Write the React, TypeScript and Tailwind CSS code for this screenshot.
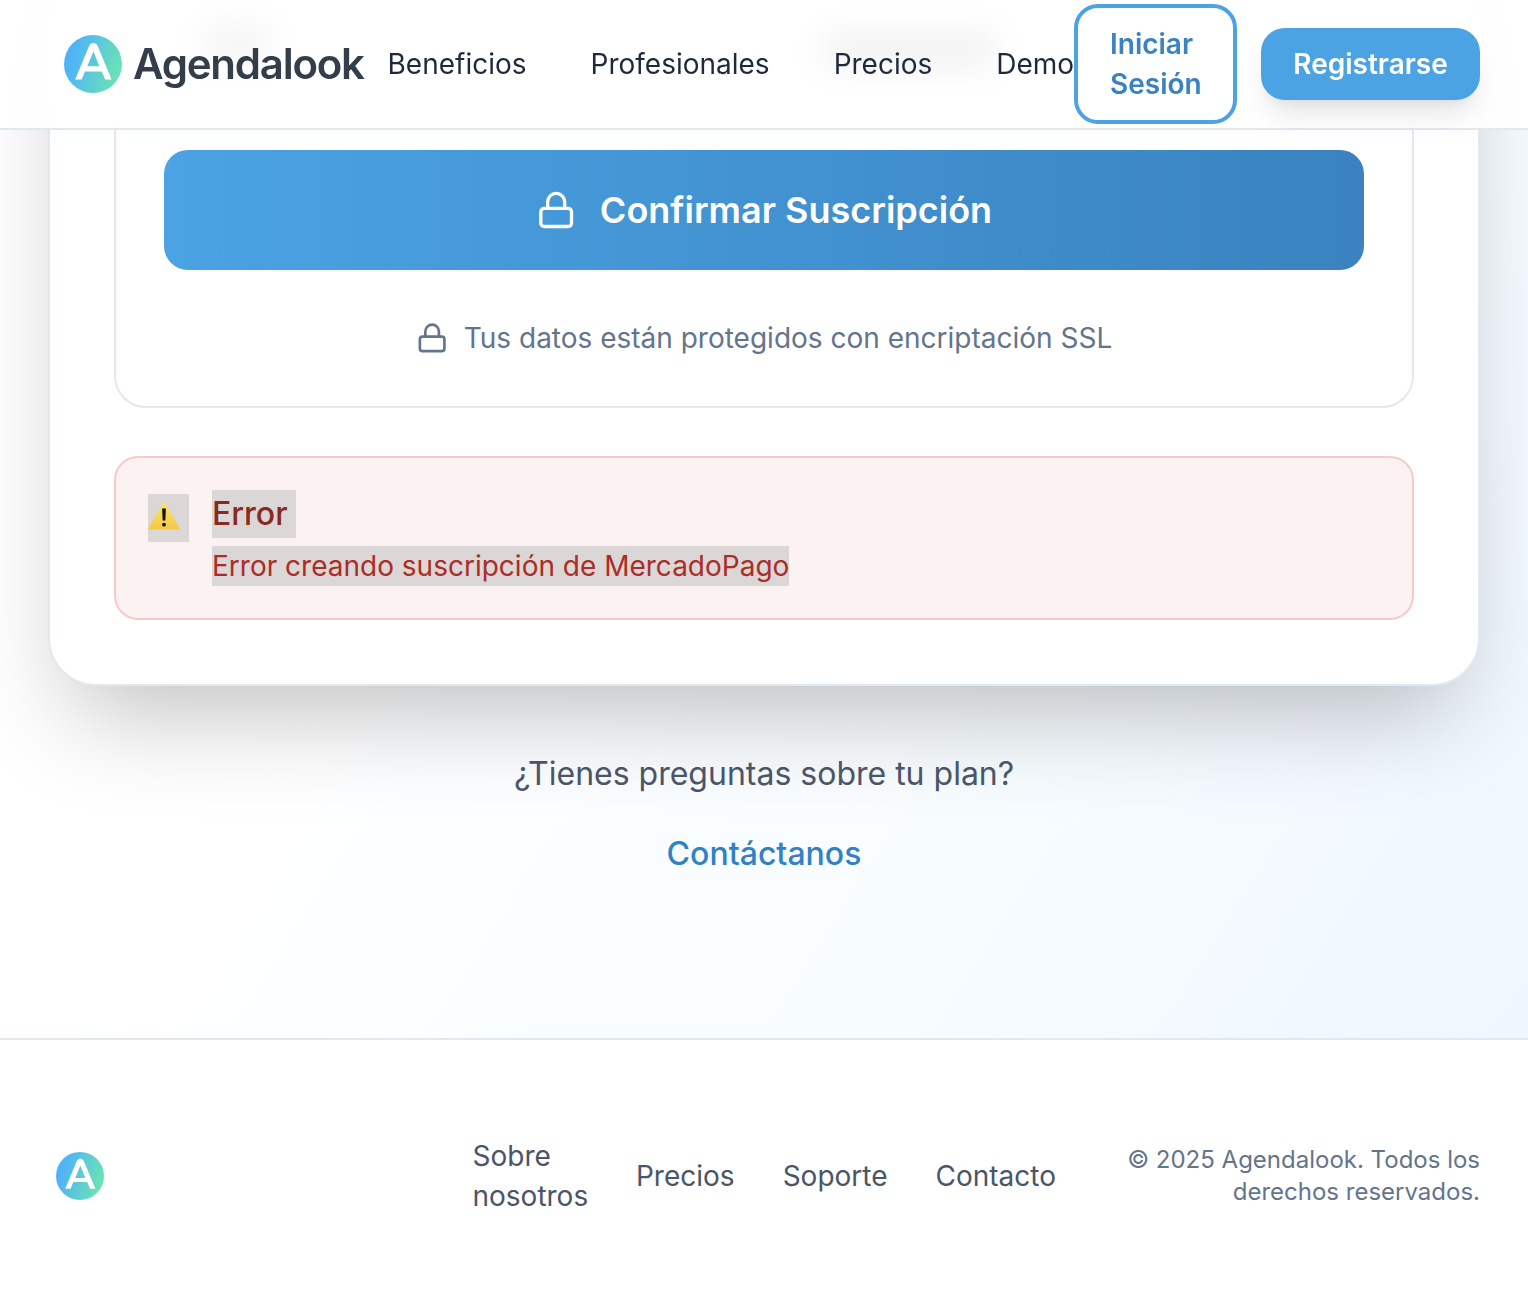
import React from "react";

function LogoMark({ id, className }: { id: string; className: string }) {
  return (
    <svg viewBox="0 0 58 58" className={className} aria-hidden="true">
      <defs>
        <linearGradient id={id} x1="0" y1="0.35" x2="1" y2="0.65">
          <stop offset="0.1" stopColor="#4fb2f9" />
          <stop offset="0.9" stopColor="#68e0b8" />
        </linearGradient>
      </defs>
      <circle cx="29" cy="29" r="29" fill={`url(#${id})`} />
      <path
        fillRule="evenodd"
        fill="#fff"
        d="M11.2 44.4 L24.9 11.4 Q26.4 8 29.4 8 Q32.4 8 33.9 11.4 L47.6 44.4 H41.2 L37.8 36.4 H21 L17.6 44.4 Z M23.3 31.3 H35.5 L29.4 16.6 Z"
      />
    </svg>
  );
}

function LockIcon({ className }: { className: string }) {
  return (
    <svg viewBox="0 0 24 24" fill="none" stroke="currentColor" strokeWidth="2" strokeLinejoin="round" className={className} aria-hidden="true">
      <rect x="2.9" y="11" width="18.4" height="10.9" rx="2" />
      <path d="M7 11V7.1a5.1 5.1 0 0110.2 0V11" />
    </svg>
  );
}

function Warning() {
  return (
    <svg viewBox="0 0 32 28" className="-mt-1 h-7 w-8" aria-hidden="true">
      <defs>
        <linearGradient id="warn" x1="0" y1="0" x2="0" y2="1">
          <stop offset="0" stopColor="#fbe36a" />
          <stop offset="1" stopColor="#f6c843" />
        </linearGradient>
      </defs>
      <path d="M14.9 0.9 Q16 -0.5 17.1 0.9 L31.6 26 Q32.2 27.5 30.5 27.6 H1.5 Q-0.2 27.5 0.4 26 Z" fill="url(#warn)" />
      <path d="M14.1 6.6 H17.9 L17.3 18.4 H14.7 Z" fill="#111" />
      <circle cx="16" cy="22.7" r="1.9" fill="#111" />
    </svg>
  );
}

const navLinks = ["Beneficios", "Profesionales", "Precios", "Demo"];

export default function App() {
  return (
    <div className="flex h-[1312px] w-[1528px] flex-col overflow-hidden bg-white font-['Inter',sans-serif] text-[28px] leading-10">
      <header className="relative z-10 flex h-[130px] shrink-0 items-center border-b-2 border-[#e2e8f0] bg-white/90 pr-12 pl-16 backdrop-blur-lg">
        <div className="absolute top-6 left-[200px] h-10 w-[74px] rounded-full bg-black/4 blur-lg" />
        <div className="absolute top-8 left-[820px] h-9 w-[180px] rounded-full bg-black/5 blur-lg" />
        <div className="relative flex w-[323.5px] shrink-0 items-center">
          <LogoMark id="mark-header" className="size-[58px]" />
          <span className="mb-px ml-[11px] text-[42px] font-semibold tracking-[-1.23px] text-[#343d4a]">Agendalook</span>
        </div>
        <nav className="relative flex w-[686.5px] shrink-0 gap-16 whitespace-nowrap text-[#1e293b]">
          {navLinks.map((l) => (
            <a key={l}>{l}</a>
          ))}
        </nav>
        <div className="relative flex flex-1 items-center justify-between font-semibold">
          <a className="w-[163px] rounded-3xl border-4 border-[#4ba3e3] bg-white px-8 py-4 text-[#3a82c0]">
            Iniciar Sesión
          </a>
          <a className="flex h-[72px] w-[219px] items-center justify-center rounded-3xl bg-[#4ba3e3] text-white shadow-[0_20px_30px_-6px_rgba(0,0,0,0.1),0_8px_12px_-4px_rgba(0,0,0,0.05)]">
            Registrarse
          </a>
        </div>
      </header>

      <main className="h-[908px] shrink-0 bg-linear-[122deg] from-white from-30% via-[#f7fcff] via-68% to-[#eff6ff] px-12">
        <div className="-mt-[230px] flex h-[786px] flex-col justify-end rounded-[48px] border-2 border-[#e2e8f0] bg-white px-16 pb-16 shadow-[0_50px_100px_-24px_rgba(0,0,0,0.25)]">
          <section className="rounded-[32px] border-2 border-[#e5e7eb] px-12 pt-[132px] pb-12">
            <button className="flex h-[120px] w-full items-center justify-center rounded-3xl bg-linear-to-r from-[#4ba3e3] to-[#3a82c0] text-[36px] font-semibold text-white">
              <LockIcon className="mr-6 size-10" />
              Confirmar Suscripción
            </button>
            <p className="mt-12 flex items-center justify-center text-[#64748b]">
              <LockIcon className="mr-4 size-8" />
              Tus datos están protegidos con encriptación SSL
            </p>
          </section>
          <section className="mt-12 flex h-[164px] shrink-0 items-start rounded-3xl border-2 border-[#f6caca] bg-[#fcf2f1] p-8">
            <div className="mt-1 flex h-12 w-[41px] items-center bg-[#dbd7d6]">
              <Warning />
            </div>
            <div className="ml-[23px] flex flex-col items-start">
              <h3 className="w-[84px] bg-[#dbd7d6] text-[32px] leading-[48px] font-medium text-[#8a2822]">Error</h3>
              <p className="mt-2 bg-[#dbd7d6] text-[#ad2c26]">Error creando suscripción de MercadoPago</p>
            </div>
          </section>
        </div>
        <div className="mt-16 text-center text-[32px] leading-[48px]">
          <p className="text-[#4a5568]">¿Tienes preguntas sobre tu plan?</p>
          <a className="mt-8 block font-medium text-[#3182c4]">Contáctanos</a>
        </div>
      </main>

      <footer className="flex flex-1 items-center justify-between border-t-2 border-[#e2e8f0] bg-white px-12 text-[#4a5568]">
        <LogoMark id="mark-footer" className="mx-2 size-12" />
        <div className="flex items-center">
          <nav className="flex items-center gap-12">
            <a className="w-[115.5px]">Sobre nosotros</a>
            <a>Precios</a>
            <a>Soporte</a>
            <a>Contacto</a>
          </nav>
          <p className="ml-16 w-[360px] text-right text-[24px] leading-8 text-[#64748b]">
            © 2025 Agendalook. Todos los derechos reservados.
          </p>
        </div>
      </footer>
    </div>
  );
}
